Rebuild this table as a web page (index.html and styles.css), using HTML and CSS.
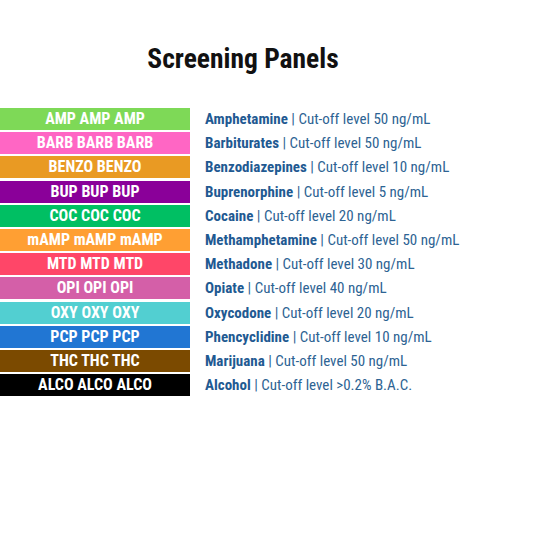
FILE: index.html
```html
<!DOCTYPE html>
<html>
<head>
<meta charset="utf-8">
<link rel="stylesheet" href="styles.css">
</head>
<body>
<div class="page">
  <h1 class="title">Screening Panels</h1>
  <div class="panels">
    <div class="row"><div class="tag amp">AMP AMP AMP</div><div class="desc"><b>Amphetamine</b> | Cut-off level 50 ng/mL</div></div>
    <div class="row"><div class="tag barb">BARB BARB BARB</div><div class="desc"><b>Barbiturates</b> | Cut-off level 50 ng/mL</div></div>
    <div class="row"><div class="tag benzo">BENZO BENZO</div><div class="desc"><b>Benzodiazepines</b> | Cut-off level 10 ng/mL</div></div>
    <div class="row"><div class="tag bup">BUP BUP BUP</div><div class="desc"><b>Buprenorphine</b> | Cut-off level 5 ng/mL</div></div>
    <div class="row"><div class="tag coc">COC COC COC</div><div class="desc"><b>Cocaine</b> | Cut-off level 20 ng/mL</div></div>
    <div class="row"><div class="tag mamp">mAMP mAMP mAMP</div><div class="desc"><b>Methamphetamine</b> | Cut-off level 50 ng/mL</div></div>
    <div class="row"><div class="tag mtd">MTD MTD MTD</div><div class="desc"><b>Methadone</b> | Cut-off level 30 ng/mL</div></div>
    <div class="row"><div class="tag opi">OPI OPI OPI</div><div class="desc"><b>Opiate</b> | Cut-off level 40 ng/mL</div></div>
    <div class="row"><div class="tag oxy">OXY OXY OXY</div><div class="desc"><b>Oxycodone</b> | Cut-off level 20 ng/mL</div></div>
    <div class="row"><div class="tag pcp">PCP PCP PCP</div><div class="desc"><b>Phencyclidine</b> | Cut-off level 10 ng/mL</div></div>
    <div class="row"><div class="tag thc">THC THC THC</div><div class="desc"><b>Marijuana</b> | Cut-off level 50 ng/mL</div></div>
    <div class="row"><div class="tag alco">ALCO ALCO ALCO</div><div class="desc"><b>Alcohol</b> | Cut-off level &gt;0.2% B.A.C.</div></div>
  </div>
</div>
</body>
</html>
```
FILE: styles.css
```css
html, body {
  margin: 0;
  padding: 0;
  background: #fff;
}
.page {
  width: 533px;
  height: 533px;
  font-family: "Roboto Condensed", "Liberation Sans Narrow", "DejaVu Sans Condensed", Roboto, sans-serif;
  font-stretch: condensed;
}
.title {
  margin: 0;
  padding: 43px 47px 33px 0;
  text-align: center;
  font-size: 27.5px;
  line-height: 32px;
  font-weight: 700;
  color: #111;
}
.panels {
  display: flex;
  flex-direction: column;
  gap: 2.2px;
}
.row {
  display: flex;
  align-items: center;
  height: 22px;
}
.tag {
  width: 190px;
  height: 22px;
  flex: none;
  text-align: center;
  color: #fff;
  font-weight: 700;
  font-size: 16px;
  line-height: 22px;
}
.desc {
  margin-left: 15px;
  font-size: 15px;
  line-height: 22px;
  color: #2d6393;
  white-space: nowrap;
}
.desc b {
  color: #1f5a92;
}
.amp { background: #7ed957; }
.barb { background: #ff66c4; }
.benzo { background: #e99a23; }
.bup { background: #8a0099; }
.coc { background: #00bf63; }
.mamp { background: #ff9f33; }
.mtd { background: #ff4668; }
.opi { background: #d45fa8; }
.oxy { background: #52cfd1; }
.pcp { background: #2176d3; }
.thc { background: #7b4a00; }
.alco { background: #000; }
```
